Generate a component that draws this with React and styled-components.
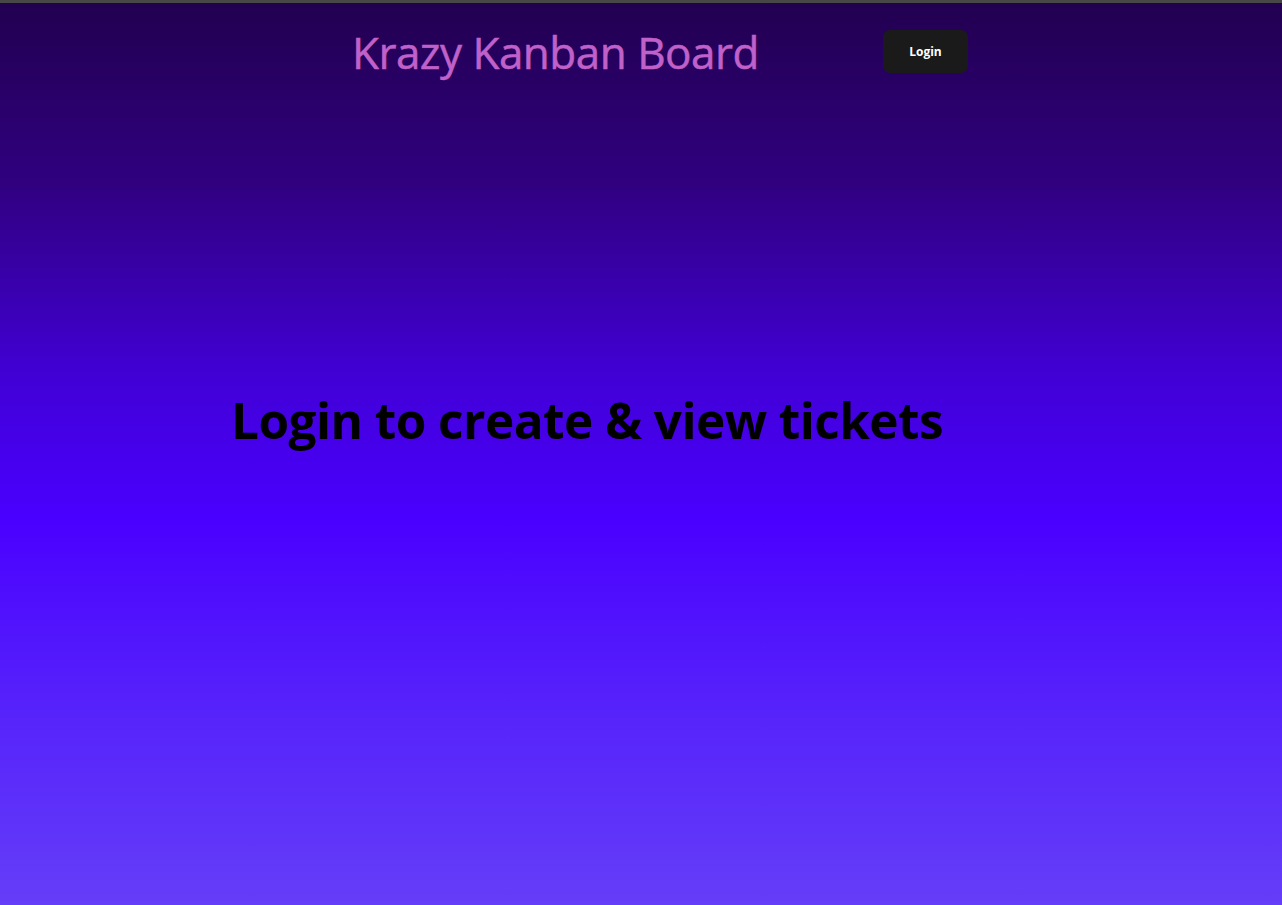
import React from 'react'
import styled, { createGlobalStyle } from 'styled-components'

const GlobalStyle = createGlobalStyle`
  html, body {
    margin: 0;
    padding: 0;
    height: 100%;
  }
  body {
    font-family: 'Open Sans', 'Noto Sans', sans-serif;
  }
`

const Page = styled.div`
  min-height: 905px;
  display: flex;
  flex-direction: column;
  border-top: 3px solid #474747;
  box-sizing: border-box;
  background: linear-gradient(
    to bottom,
    #220050 0%,
    #300080 20%,
    #4200d8 42%,
    #4a00ff 57%,
    #5622fb 78%,
    #653ef8 100%
  );
`

const Nav = styled.nav`
  display: flex;
  align-items: center;
  padding: 21px 0 0 352px;
  height: 55px;
`

const Title = styled.h1`
  margin: 0;
  font-size: 44px;
  font-weight: 400;
  color: #c061c9;
  -webkit-text-stroke: 0.5px #c061c9;
  letter-spacing: -0.5px;
  width: 531px;
`

const Button = styled.button`
  width: 85px;
  height: 43px;
  border: none;
  border-radius: 7px;
  background: #1a1a1a;
  color: #fff;
  font-family: inherit;
  font-size: 12px;
  font-weight: 700;
  cursor: pointer;
`

const Main = styled.main`
  display: flex;
  padding: 307px 0 0 231px;
`

const Message = styled.h2`
  margin: 0;
  font-size: 49.5px;
  font-weight: 700;
  color: #000;
  letter-spacing: -0.55px;
`

export default function App() {
  return (
    <>
      <GlobalStyle />
      <Page>
        <Nav>
          <Title>Krazy Kanban Board</Title>
          <Button>Login</Button>
        </Nav>
        <Main>
          <Message>Login to create &amp; view tickets</Message>
        </Main>
      </Page>
    </>
  )
}
